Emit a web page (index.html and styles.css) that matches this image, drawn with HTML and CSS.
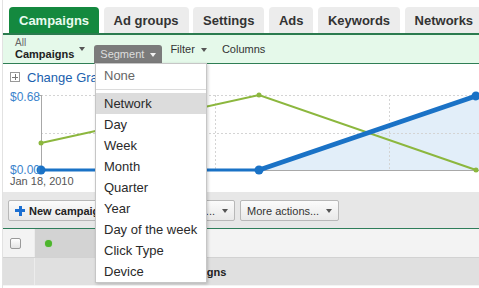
FILE: index.html
```html
<!DOCTYPE html>
<html lang="en">
<head>
    <meta charset="UTF-8">
    <title>Campaigns</title>
    <link rel="stylesheet" href="styles.css">
</head>
<body>
    <div class="page">
        <div class="tabs">
            <div class="tab active">Campaigns</div>
            <div class="tab">Ad groups</div>
            <div class="tab">Settings</div>
            <div class="tab">Ads</div>
            <div class="tab">Keywords</div>
            <div class="tab">Networks</div>
        </div>

        <div class="toolbar">
            <div class="scope">
                <span class="scope-all">All</span>
                <span class="scope-name">Campaigns</span>
            </div>
            <span class="caret scope-caret"></span>
            <div class="segment">Segment <span class="caret light"></span></div>
            <div class="tool">Filter <span class="caret"></span></div>
            <div class="tool">Columns</div>
        </div>

        <div class="chart">
            <div class="chart-title">
                <span class="plus-box"></span>
                <span class="chart-link">Change Graph Options</span>
            </div>
            <svg class="graph" width="476" height="102" viewBox="0 0 476 102">
                <polygon points="256,80 473,6 476,6 476,80" fill="#e2eef9"/>
                <g stroke="#d4d4d4" stroke-dasharray="2,2" fill="none">
                    <line x1="38" y1="5.5" x2="476" y2="5.5"/>
                    <line x1="38" y1="43.5" x2="476" y2="43.5"/>
                    <line x1="212.5" y1="5" x2="212.5" y2="80"/>
                    <line x1="386.5" y1="5" x2="386.5" y2="80"/>
                </g>
                <line x1="38.5" y1="5" x2="38.5" y2="80" stroke="#a8a8a8"/>
                <line x1="35" y1="5.5" x2="38" y2="5.5" stroke="#a8a8a8"/>
                <line x1="38" y1="80.5" x2="476" y2="80.5" stroke="#a8a8a8"/>
                <polyline points="38,53 256,5 473,80" fill="none" stroke="#8cb73e" stroke-width="2"/>
                <circle cx="38" cy="53" r="2.5" fill="#8cb73e"/>
                <circle cx="256" cy="5" r="2.5" fill="#8cb73e"/>
                <circle cx="473" cy="80" r="2.5" fill="#8cb73e"/>
                <line x1="38" y1="80" x2="256" y2="80" stroke="#1a72c6" stroke-width="3"/>
                <line x1="256" y1="80" x2="473" y2="6" stroke="#1a72c6" stroke-width="5"/>
                <circle cx="38" cy="80" r="4.5" fill="#1a72c6"/>
                <circle cx="256" cy="80" r="4.5" fill="#1a72c6"/>
                <circle cx="473" cy="6" r="4.5" fill="#1a72c6"/>
                <text x="7" y="11" class="axis-money">$0.68</text>
                <text x="7" y="84" class="axis-money">$0.00</text>
                <text x="7" y="95" class="axis-date">Jan 18, 2010</text>
            </svg>
        </div>

        <div class="actions">
            <button class="btn"><span class="plus"></span><b>New campaign</b></button>
            <button class="btn status-btn">Change status... <span class="caret"></span></button>
            <button class="btn">More actions... <span class="caret"></span></button>
        </div>

        <div class="grid-row filter-row">
            <div class="cell check-cell"><span class="checkbox"></span></div>
            <div class="cell status-cell"><span class="dot"></span></div>
        </div>
        <div class="grid-row head-row">
            <div class="cell check-cell"></div>
            <div class="cell name-cell">Campaigns</div>
        </div>

        <ul class="menu">
            <li class="none">None</li>
            <li class="sep"></li>
            <li class="hover">Network</li>
            <li>Day</li>
            <li>Week</li>
            <li>Month</li>
            <li>Quarter</li>
            <li>Year</li>
            <li>Day of the week</li>
            <li>Click Type</li>
            <li>Device</li>
        </ul>
    </div>
</body>
</html>
```

FILE: styles.css
```css
* {
    margin: 0;
    padding: 0;
    box-sizing: border-box;
}

body {
    font-family: 'Liberation Sans', Arial, sans-serif;
    background: white;
    color: #222;
    overflow: hidden;
}

.page {
    position: relative;
    margin-left: 2px;
    border-left: 1px solid #e2e2e2;
    height: 288px;
}

/* Tabs */
.tabs {
    display: flex;
    gap: 4.5px;
    padding: 7px 0 0 6px;
    border-bottom: 2px solid #2b7b4f;
    white-space: nowrap;
}

.tab {
    height: 26px;
    line-height: 27px;
    padding: 0 10px;
    border-radius: 4px 4px 0 0;
    background: #ececec;
    color: #333;
    font-size: 13px;
    font-weight: bold;
}

.tab.active {
    background: #14893f;
    color: #e9fbef;
}

/* Toolbar */
.toolbar {
    display: flex;
    align-items: center;
    height: 29px;
    padding-left: 12px;
    background: #e5f9ea;
    border-bottom: 1px solid #2f7e55;
    font-size: 11px;
}

.scope {
    display: flex;
    flex-direction: column;
    margin-top: 1px;
}

.scope-all {
    font-size: 10px;
    line-height: 10px;
    color: #666;
}

.scope-name {
    font-weight: bold;
    line-height: 13px;
    color: #222;
}

.caret {
    display: inline-block;
    width: 0;
    height: 0;
    border-left: 3.5px solid transparent;
    border-right: 3.5px solid transparent;
    border-top: 4px solid #555;
    vertical-align: middle;
    margin-left: 3px;
}

.caret.light {
    border-top-color: #f2f2f2;
}

.scope-caret {
    align-self: flex-start;
    margin: 12px 0 0 5px;
}

.segment {
    align-self: flex-end;
    height: 19px;
    line-height: 19px;
    margin: 0 8px -1px 9px;
    padding: 0 6px;
    background: #7b7b7b;
    border-radius: 3px 3px 0 0;
    color: #dedede;
    position: relative;
    z-index: 2;
}

.tool {
    color: #333;
    margin-right: 15px;
}

/* Chart */
.chart {
    height: 128px;
    background: white;
}

.chart-title {
    display: flex;
    align-items: center;
    gap: 7px;
    height: 26px;
    padding-left: 7px;
}

.plus-box {
    position: relative;
    width: 10px;
    height: 10px;
    border: 1px solid #999;
    background: white;
}

.plus-box::before,
.plus-box::after {
    content: '';
    position: absolute;
    background: #777;
}

.plus-box::before {
    left: 1px;
    right: 1px;
    top: 3.5px;
    height: 1px;
}

.plus-box::after {
    top: 1px;
    bottom: 1px;
    left: 3.5px;
    width: 1px;
}

.chart-link {
    color: #1b5fae;
    font-size: 13px;
}

.graph {
    display: block;
}

.axis-money {
    font-family: 'Liberation Sans', Arial, sans-serif;
    font-size: 12px;
    fill: #3b84cd;
}

.axis-date {
    font-family: 'Liberation Sans', Arial, sans-serif;
    font-size: 11px;
    fill: #555;
}

/* Action bar */
.actions {
    display: flex;
    gap: 5px;
    height: 37px;
    padding: 8px 0 0 5px;
    background: #e7e7e7;
    border-bottom: 1px solid #2e7d5a;
}

.btn {
    display: flex;
    align-items: center;
    gap: 4px;
    height: 21px;
    padding: 0 6px;
    border: 1px solid #b8b8b8;
    border-radius: 2px;
    background: linear-gradient(#fbfbfb, #e9e9e9);
    font-family: inherit;
    font-size: 11px;
    color: #333;
}

.btn b {
    color: #222;
}

.btn .caret {
    margin-left: 3px;
}

.status-btn {
    width: 117px;
    justify-content: flex-end;
}

.plus {
    position: relative;
    width: 10px;
    height: 10px;
}

.plus::before,
.plus::after {
    content: '';
    position: absolute;
    background: #1c6fd1;
}

.plus::before {
    left: 0;
    right: 0;
    top: 3.5px;
    height: 3px;
}

.plus::after {
    top: 0;
    bottom: 0;
    left: 3.5px;
    width: 3px;
}

/* Table rows */
.grid-row {
    display: flex;
    height: 28px;
}

.filter-row {
    background: #f3f3f3;
}

.head-row {
    background: #e0e0e0;
    border-top: 1px solid #d2d2d2;
    border-bottom: 1px solid #f4f4f4;
    height: 29px;
}

.cell {
    display: flex;
    align-items: center;
}

.check-cell {
    width: 32px;
    padding-left: 7px;
    border-right: 1px solid #ececec;
}

.checkbox {
    width: 11px;
    height: 11px;
    border: 1px solid #9a9a9a;
    border-radius: 2px;
    background: linear-gradient(#fff, #e4e4e4);
}

.status-cell {
    width: 96px;
    padding-left: 10px;
    background: #d3d3d3;
}

.dot {
    width: 7px;
    height: 7px;
    border-radius: 50%;
    background: #4db52d;
    box-shadow: 0 0 1px #7fd062;
}

.name-cell {
    padding-left: 132px;
    font-size: 11px;
    font-weight: bold;
    color: #222;
}

/* Segment dropdown */
.menu {
    position: absolute;
    top: 63px;
    left: 92px;
    width: 112px;
    padding-top: 1px;
    list-style: none;
    background: white;
    border: 1px solid #c6c6c6;
    box-shadow: 1px 1px 3px rgba(0, 0, 0, 0.2);
    z-index: 3;
}

.menu li {
    height: 21px;
    line-height: 21px;
    padding-left: 8px;
    font-size: 13px;
    color: #2a2a2a;
}

.menu li.none {
    color: #666;
}

.menu li.sep {
    height: 1px;
    margin: 3px 0;
    background: #dcdcdc;
}

.menu li.hover {
    background: #dcdcdc;
}
```
